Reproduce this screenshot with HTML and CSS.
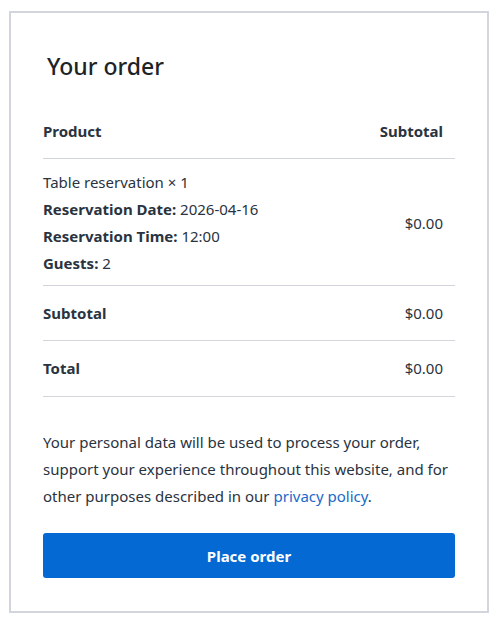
FILE: index.html
```html
<!DOCTYPE html>
<html>
<head>
<meta charset="utf-8">
<link rel="stylesheet" href="styles.css">
</head>
<body>
<div class="box">
  <h3 class="title">Your order</h3>
  <table class="order">
    <thead>
      <tr><th class="name">Product</th><th class="total">Subtotal</th></tr>
    </thead>
    <tbody>
      <tr class="item">
        <td class="name">
          <div>Table reservation <span class="qty">×&nbsp;1</span></div>
          <div><strong>Reservation Date:</strong> 2026-04-16</div>
          <div><strong>Reservation Time:</strong> 12:00</div>
          <div><strong>Guests:</strong> 2</div>
        </td>
        <td class="total">$0.00</td>
      </tr>
    </tbody>
    <tfoot>
      <tr class="sub"><th class="name">Subtotal</th><td class="total">$0.00</td></tr>
      <tr class="grand"><th class="name">Total</th><td class="total">$0.00</td></tr>
    </tfoot>
  </table>
  <p class="privacy">Your personal data will be used to process your order, support your experience throughout this website, and for other purposes described in our <a href="#">privacy policy</a>.</p>
  <button class="place">Place order</button>
</div>
</body>
</html>
```
FILE: styles.css
```css
html, body { margin: 0; padding: 0; background: #fff; }
body {
  font-family: "Noto Sans", "Open Sans", sans-serif;
  font-size: 15px;
  color: #2a3340;
  padding: 11px 9px;
}
.box {
  width: 480px;
  box-sizing: border-box;
  border: 2px solid #d3d5dc;
  padding: 32px 32px 33px;
}
.title {
  margin: 6px 0 24px;
  padding-left: 4px;
  font-size: 23px;
  font-weight: 500;
  line-height: 30px;
  color: #1d2327;
}
.order {
  width: 100%;
  border-collapse: collapse;
}
.order th, .order td {
  padding: 13px 12px 13px 0;
  line-height: 27px;
  border-bottom: 1px solid #d3d5dc;
  text-align: left;
  vertical-align: middle;
}
.order th { font-weight: 700; }
.order .total { text-align: right; }
.order .item td { padding-top: 10px; padding-bottom: 8px; }
.order .item .name div { line-height: 27px; }
.order strong { font-weight: 700; }
.qty { font-weight: 400; }
.order .sub td, .order .sub th { padding-top: 14px; padding-bottom: 13px; }
.order .grand td, .order .grand th { padding-top: 14px; padding-bottom: 14px; }
.privacy {
  margin: 32px 0 23px;
  line-height: 27px;
}
.privacy a { color: #1a69c9; text-decoration: none; }
.place {
  display: block;
  width: 100%;
  height: 45px;
  border: 0;
  border-radius: 3px;
  background: #0469d3;
  color: #fff;
  font-family: inherit;
  font-size: 15px;
  font-weight: 700;
  cursor: pointer;
}
```
